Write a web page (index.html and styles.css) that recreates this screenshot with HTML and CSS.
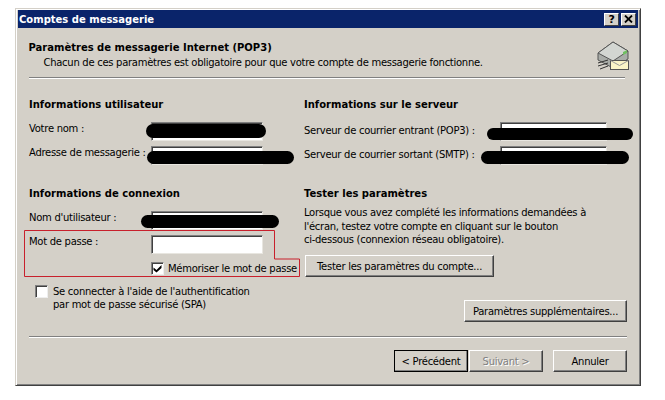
FILE: index.html
```html
<!DOCTYPE html>
<html lang="fr">
  <head>
    <meta charset="UTF-8" />
    <title>Comptes de messagerie</title>
    <link rel="stylesheet" href="styles.css">
  </head>
  <body>
    <div class="window">
      <div class="titlebar">
        <span class="title-text">Comptes de messagerie</span>
        <div class="title-btn">?</div>
        <div class="title-btn title-close">
          <svg width="9" height="8" viewBox="0 0 9 8"><path d="M1 0.500L8 7.500M8 0.500L1 7.500" fill="none" stroke="#000" stroke-width="1.800"/></svg>
        </div>
      </div>

      <div class="header">
        <div>
          <div class="header-title">Paramètres de messagerie Internet (POP3)</div>
          <div class="header-sub">Chacun de ces paramètres est obligatoire pour que votre compte de messagerie fonctionne.</div>
        </div>
        <!-- disk with envelope -->
        <svg class="header-icon" width="33" height="32" viewBox="0 0 33 32">
          <path d="M16 1L31 10V18L16 27L1 19V12Z" fill="#a9aca8" stroke="#555"/>
          <path d="M16 1L31 10L16 20L1 12Z" fill="#d3d6d2" stroke="#555"/>
          <path d="M26 11l4-2v3l-4 2z" fill="#6fbf5f"/>
          <path d="M1 22l10-3M1 25l10-3M3 28l8-3" stroke="#333" fill="none"/>
          <rect x="13.500" y="19.500" width="18" height="9" fill="#fbf5c8" stroke="#555"/>
          <path d="M13.500 19.500l9 5 9-5" fill="none" stroke="#999"/>
        </svg>
      </div>
      <div class="sep"></div>

      <div class="columns">
        <div class="col">
          <h2>Informations utilisateur</h2>
          <div class="field first"><label>Votre nom :</label><div class="input"></div></div>
          <div class="field"><label>Adresse de messagerie :</label><div class="input"></div></div>
          <h2 class="h-second">Informations de connexion</h2>
          <div class="field first"><label>Nom d'utilisateur :</label><div class="input"></div></div>
          <div class="field"><label>Mot de passe :</label><div class="input"></div></div>
          <div class="remember">
            <div class="check">
              <svg width="9" height="9" viewBox="0 0 9 9"><path d="M0.500 3.500L3.500 6 8.500 1V4L3.500 8.500 .5 6z" fill="#000"/></svg>
            </div>
            <span>Mémoriser le mot de passe</span>
          </div>
        </div>
        <div class="col">
          <h2>Informations sur le serveur</h2>
          <div class="field first wide"><label>Serveur de courrier entrant (POP3) :</label><div class="input"></div></div>
          <div class="field wide"><label>Serveur de courrier sortant (SMTP) :</label><div class="input"></div></div>
          <h2 class="h-second">Tester les paramètres</h2>
          <p class="test-text">Lorsque vous avez complété les informations demandées à<br>l'écran, testez votre compte en cliquant sur le bouton<br>ci-dessous (connexion réseau obligatoire).</p>
          <button class="btn btn-test">Tester les paramètres du compte...</button>
        </div>
      </div>

      <div class="lower">
        <div class="spa">
          <div class="check"></div>
          <span>Se connecter à l'aide de l'authentification<br>par mot de passe sécurisé (SPA)</span>
        </div>
        <button class="btn btn-more">Paramètres supplémentaires...</button>
      </div>
      <div class="sep sep-bottom"></div>

      <div class="footer">
        <button class="btn btn-nav btn-default">&lt; Précédent</button>
        <button class="btn btn-nav btn-disabled">Suivant &gt;</button>
        <button class="btn btn-nav btn-cancel">Annuler</button>
      </div>

      <!-- hand drawn red box around the password -->
      <svg class="red-box" width="285" height="50" viewBox="0 0 285 50">
        <path d="M.5 .5H250.500V29H275.500V46.500H.5Z" fill="none" stroke="#c8202c"/>
      </svg>

      <!-- blacked out values -->
      <div class="scribble s1"></div>
      <div class="scribble s2"></div>
      <div class="scribble s3"></div>
      <div class="scribble s4"></div>
      <div class="scribble s5"></div>
    </div>
  </body>
</html>
```

FILE: styles.css
```css
* {
  box-sizing: border-box;
  margin: 0;
  padding: 0;
}

body {
  background: #fff;
  font-family: 'DejaVu Sans', sans-serif;
  font-size: 10px;
  letter-spacing: -0.28px;
  color: #000;
  height: 400px;
  overflow: hidden;
}

.window {
  position: absolute;
  left: 15px;
  top: 8px;
  width: 626px;
  height: 378px;
  padding: 1px 2px 2px 2px;
  background: #d4d0c8;
  border: 1px solid #d4d0c8;
  border-right-color: #404040;
  border-bottom-color: #404040;
  box-shadow: inset 1px 1px #fff, inset -1px -1px #808080;
}

.titlebar {
  display: flex;
  align-items: center;
  height: 18px;
  padding: 0 2px 0 1px;
  background: #0a246a;
  color: #fff;
}

.title-text {
  flex: 1;
  font-weight: bold;
  font-size: 10px;
  letter-spacing: 0;
}

.title-btn {
  display: flex;
  align-items: center;
  justify-content: center;
  width: 15px;
  height: 13px;
  background: #d4d0c8;
  color: #000;
  font-weight: bold;
  font-size: 11px;
  border: 1px solid #fff;
  border-right-color: #404040;
  border-bottom-color: #404040;
}

.title-close {
  margin-left: 2px;
}

.header {
  display: flex;
  justify-content: space-between;
  height: 49px;
  padding: 13px 8px 0 10.500px;
}

.header-title {
  font-weight: bold;
  letter-spacing: 0;
  line-height: 13px;
}

.header-sub {
  margin-top: 2px;
  padding-left: 15px;
  line-height: 13px;
}

.sep {
  height: 2px;
  margin: 0 13px 0 11px;
  border-top: 1px solid #808080;
  border-bottom: 1px solid #fff;
}

.columns {
  display: flex;
  padding-left: 11px;
  margin-top: 19px;
}

.col {
  width: 275px;
  flex: none;
}

h2 {
  font-size: 10px;
  font-weight: bold;
  letter-spacing: 0;
  line-height: 13px;
}

.h-second {
  margin-top: 22px;
}

.field {
  display: grid;
  grid-template-columns: 122px 112px;
  height: 19px;
  margin-top: 5px;
  line-height: 13px;
  white-space: nowrap;
}

.field.first {
  margin-top: 11px;
}

.field.wide {
  grid-template-columns: 196px 107px;
}

.wide label {
  margin-top: 2px;
}

.input {
  background: #fff;
  border: 1px solid #808080;
  border-right-color: #e8e6e0;
  border-bottom-color: #e8e6e0;
  box-shadow: inset 1px 1px #404040;
}

.remember {
  display: flex;
  align-items: center;
  gap: 4px;
  margin: 8px 0 0 122px;
  white-space: nowrap;
}

.check {
  display: flex;
  align-items: center;
  justify-content: center;
  flex: none;
  width: 13px;
  height: 13px;
  background: #fff;
  border: 1px solid #808080;
  border-right-color: #eee;
  border-bottom-color: #eee;
  box-shadow: inset 1px 1px #404040;
}

.test-text {
  margin-top: 6px;
  line-height: 13.500px;
  white-space: nowrap;
}

.btn {
  display: block;
  height: 22px;
  background: #d4d0c8;
  font-family: inherit;
  font-size: 10px;
  letter-spacing: inherit;
  color: #000;
  border: 1px solid #fff;
  border-right-color: #404040;
  border-bottom-color: #404040;
  box-shadow: inset -1px -1px #808080;
}

.btn-test {
  width: 189px;
  margin: 8.500px 0 0 1px;
}

.lower {
  display: flex;
  justify-content: space-between;
  align-items: flex-start;
  padding: 0 11px 0 17px;
  margin-top: 7px;
}

.spa {
  display: flex;
  gap: 5px;
  line-height: 13px;
  padding-top: 1px;
}

.btn-more {
  width: 163px;
  margin-top: 16px;
}

.sep-bottom {
  margin: 14px 11px 0 11px;
}

.footer {
  display: flex;
  justify-content: flex-end;
  padding-right: 11px;
  margin-top: 12px;
}

.btn-nav {
  width: 74px;
}

.btn-default {
  outline: 1px solid #000;
  outline-offset: -1px;
  margin-right: 1px;
}

.btn-disabled {
  color: #808080;
  text-shadow: 1px 1px #fff;
}

.btn-cancel {
  margin-left: 10px;
}

.red-box {
  position: absolute;
  left: 8px;
  top: 221px;
}

.scribble {
  position: absolute;
  background: #000;
  border-radius: 7px;
}

.s1 { left: 130px; top: 115px; width: 120px; height: 14px; }
.s2 { left: 131px; top: 142px; width: 147px; height: 13px; }
.s3 { left: 125px; top: 206px; width: 138px; height: 13px; }
.s4 { left: 471px; top: 119px; width: 146px; height: 12px; }
.s5 { left: 465px; top: 142px; width: 148px; height: 13px; }
```
